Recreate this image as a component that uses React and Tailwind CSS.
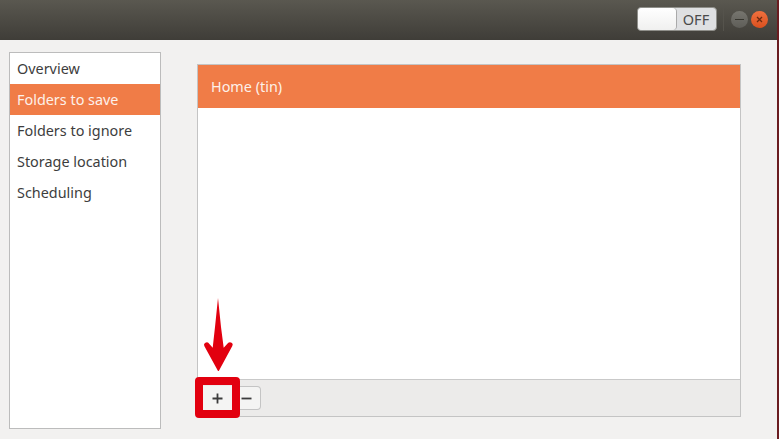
export default function App() {
  const items = ["Overview", "Folders to save", "Folders to ignore", "Storage location", "Scheduling"];
  return (
    <div className="relative flex h-[439px] w-[779px] overflow-hidden bg-[#f2f1f0] text-[14.4px] text-[#3d3d3d]" style={{ fontFamily: '"Noto Sans", sans-serif' }}>
      <div className="flex min-w-0 flex-1 flex-col">
        <header className="flex h-10 shrink-0 items-center justify-end bg-gradient-to-b from-[#5a5850] to-[#3f3d38] pb-[2px] pr-[9px]">
          <div className="flex h-[24px] w-[80px] items-center rounded-[4px] border border-[#8f8f8a] bg-[#dfe0e2]">
            <div className="h-full w-[38px] rounded-[4px] bg-gradient-to-b from-white to-[#f0f0ef] shadow-[1px_0_0_#aaa]" />
            <span className="flex-1 text-center text-[14.5px] leading-none text-[#4a4a4a]">OFF</span>
          </div>
          <div className="ml-[6px] h-[24px] w-px bg-[#55534c]" />
          <div className="ml-[7px] flex h-[17px] w-[17px] items-center justify-center rounded-full bg-gradient-to-b from-[#77766f] to-[#5e5d58]">
            <div className="h-px w-[9px] bg-[#37362f]" />
          </div>
          <div className="ml-[3px] flex h-[17px] w-[17px] items-center justify-center rounded-full bg-gradient-to-b from-[#f0703e] to-[#d9501e]">
            <svg width="9" height="9" viewBox="0 0 9 9"><path d="M2 2l5 5M7 2l-5 5" stroke="#6b2a10" strokeWidth="1.3" /></svg>
          </div>
        </header>
        <div className="flex min-h-0 flex-1 pb-[10px] pl-[9px] pr-[36px] pt-3">
          <nav className="w-[152px] shrink-0 border border-[#bcbcbc] bg-white">
            {items.map((t, i) => (
              <div key={t} className={`flex h-[31px] items-center pl-[7px] ${i === 1 ? "bg-[#f07c47] text-[#fdf1ea]" : ""}`}>{t}</div>
            ))}
          </nav>
          <main className="mb-3 ml-9 mt-3 flex min-w-0 flex-1 flex-col border border-[#c4c4c4] bg-white">
            <div className="flex h-[43px] shrink-0 items-center bg-[#f07c47] pl-[13px] text-[#fdf1ea]">Home (tin)</div>
            <div className="flex-1" />
            <div className="flex h-[37px] shrink-0 items-center border-t border-[#c9c9c9] bg-[#ecebea] pl-[5px]">
              <button className="flex h-[24px] w-[29px] items-center justify-center bg-[#f4f4f3]">
                <svg width="11" height="11" viewBox="0 0 11 11"><path d="M5.5 0.5v10M0.5 5.5h10" stroke="#3c3c3c" strokeWidth="1.8" /></svg>
              </button>
              <button className="flex h-[24px] w-[29px] items-center justify-center rounded-r-[4px] border border-l-0 border-[#c4c4c4] bg-[#f4f4f3]">
                <svg width="11" height="11" viewBox="0 0 11 11"><path d="M0.5 5.5h10" stroke="#3c3c3c" strokeWidth="1.8" /></svg>
              </button>
            </div>
          </main>
        </div>
      </div>
      <div className="w-[2px] shrink-0 bg-[#6a1c20]" />
      <div className="absolute left-[195px] top-[377px] h-[41px] w-[45px] rounded-[4px] border-[8px] border-[#e2000f]" />
      <svg className="absolute left-[203px] top-[297px]" width="31" height="76" viewBox="0 0 31 76">
        <path d="M15 1 L18 30 L20.7 50.7 L25.3 45.7 Q27 44.5 29 46 Q30.3 47 29.3 49 L15.8 74 L15 74 L1.3 49 Q0.4 47 2 46 Q4 44.5 5.3 45.7 L9.7 50.7 L12 30 Z" fill="#e2000f" />
      </svg>
    </div>
  );
}
